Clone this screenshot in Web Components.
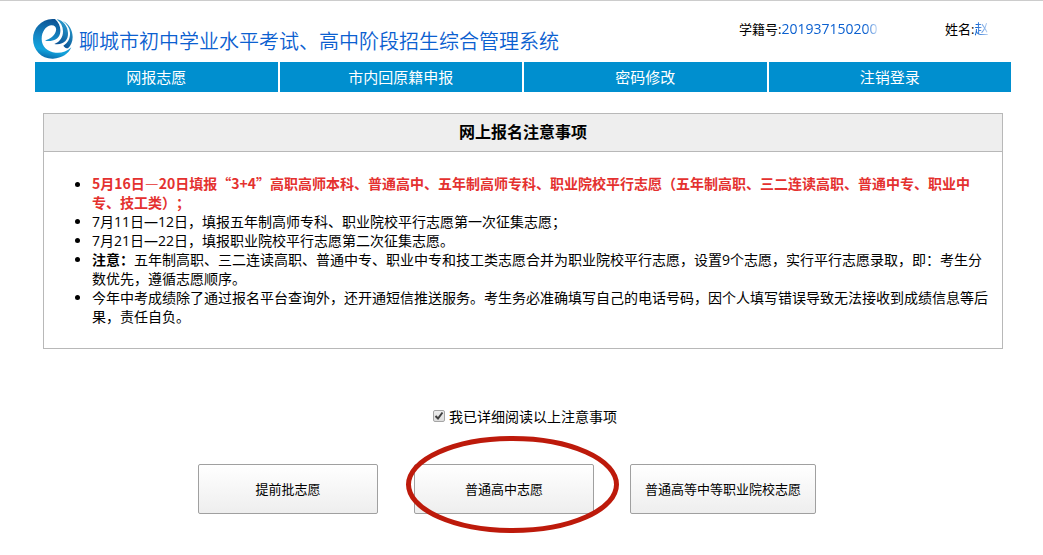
<!DOCTYPE html>
<html lang="zh-CN">
<head>
<meta charset="utf-8">
<meta name="viewport" content="width=device-width, initial-scale=1">
<title>聊城市初中学业水平考试、高中阶段招生综合管理系统</title>
<style>
body {
    margin: 0;
    border-top: 1px solid #ccc;
    background: #fff;
    color: #000;
    font: 14px/19px "Open Sans", "Noto Sans CJK SC", sans-serif;
    text-spacing-trim: space-all;
}

.urgent {
    color: #e4312f;
    font-family: "Noto Sans CJK SC", sans-serif;
    font-weight: bold;
}
</style>
</head>
<body>

<site-header>
    <user-field slot="user" label="学籍号:">201937150200</user-field>
    <user-field slot="user" label="姓名:">赵</user-field>
    聊城市初中学业水平考试、高中阶段招生综合管理系统
</site-header>

<site-nav>
    <nav-item href="#apply">网报志愿</nav-item>
    <nav-item href="#return">市内回原籍申报</nav-item>
    <nav-item href="#password">密码修改</nav-item>
    <nav-item href="#logout">注销登录</nav-item>
</site-nav>

<notice-panel>
    <span slot="title">网上报名注意事项</span>
    <notice-item class="urgent">5月16日—20日填报“3+4”高职高师本科、普通高中、五年制高师专科、职业院校平行志愿（五年制高职、三二连读高职、普通中专、职业中专、技工类）；</notice-item>
    <notice-item>7月11日—12日，填报五年制高师专科、职业院校平行志愿第一次征集志愿；</notice-item>
    <notice-item>7月21日—22日，填报职业院校平行志愿第二次征集志愿。</notice-item>
    <notice-item><b>注意：</b>五年制高职、三二连读高职、普通中专、职业中专和技工类志愿合并为职业院校平行志愿，设置9个志愿，实行平行志愿录取，即：考生分数优先，遵循志愿顺序。</notice-item>
    <notice-item>今年中考成绩除了通过报名平台查询外，还开通短信推送服务。考生务必准确填写自己的电话号码，因个人填写错误导致无法接收到成绩信息等后果，责任自负。</notice-item>
</notice-panel>

<agree-check>我已详细阅读以上注意事项</agree-check>

<choice-bar>
    <choice-button>提前批志愿</choice-button>
    <choice-button circled>普通高中志愿</choice-button>
    <choice-button>普通高等中等职业院校志愿</choice-button>
</choice-bar>

<script>
class SiteHeader extends HTMLElement {
    connectedCallback() {
        const root = this.attachShadow({ mode: "open" });
        root.innerHTML = `
            <style>
                :host { display: flex; align-items: flex-start; height: 61px; padding: 0 32px 0 33px; box-sizing: border-box; }
                svg { flex: none; width: 40px; height: 40px; margin-top: 18px; }
                h1 { flex: none; margin: 27px 0 0 6px; font-size: 20px; line-height: 28px; font-weight: 350; color: #0b60d0; }
                .user { display: flex; gap: 16px; margin: 18px 0 0 auto; }
            </style>
            <svg viewBox="0 0 120 120" aria-hidden="true">
                <defs>
                    <linearGradient id="ring" x1="0.6" y1="0" x2="0.4" y2="1">
                        <stop offset="0" stop-color="#0b4f90"/>
                        <stop offset="0.5" stop-color="#1588c6"/>
                        <stop offset="0.8" stop-color="#12a3dc"/>
                        <stop offset="1" stop-color="#0b6cac"/>
                    </linearGradient>
                    <linearGradient id="blade" x1="0.7" y1="0" x2="0.3" y2="1">
                        <stop offset="0" stop-color="#2a9fd0"/>
                        <stop offset="1" stop-color="#0b5496"/>
                    </linearGradient>
                </defs>
                <path fill="url(#ring)" d="M66 0C28-2 0 25 0 60c0 34 26 60 60 59 27-1 47-15 55-34-14 13-31 18-47 16C44 99 26 83 26 60c0-22 12-38 28-41 13-1 18 8 14 19-4 12-15 20-32 27 22 4 40-4 45-21 4-16-2-33-15-44z"/>
                <path fill="url(#blade)" d="M71 1c20 3 33 21 34 41 1 21-13 37-41 33 17-6 26-20 26-38 0-15-7-27-19-36z"/>
                <path fill="url(#blade)" d="M90 6c18 9 29 27 29 48 0 14-6 27-14 34-6 0-11-3-14-8 14-9 21-23 20-39-1-14-9-26-21-35z"/>
            </svg>
            <h1><slot></slot></h1>
            <div class="user"><slot name="user"></slot></div>
            `
    }
}

class UserField extends HTMLElement {
    connectedCallback() {
        const root = this.attachShadow({ mode: "open" });
        root.innerHTML = `
            <style>
                :host { display: flex; min-width: 66px; line-height: 20px; }
                :host(:first-child) { min-width: 190px; }
                .label { font-size: 13px; }
                /* the end of each value fades out */
                .value { padding-right: 4px; color: #0b60d0; -webkit-mask-image: linear-gradient(to left, transparent, #000 16px); mask-image: linear-gradient(to left, transparent, #000 16px); }
            </style>
            <span class="label">${this.getAttribute("label")}</span>
            <span class="value"><slot></slot></span>
            `
    }
}

class SiteNav extends HTMLElement {
    connectedCallback() {
        const root = this.attachShadow({ mode: "open" });
        root.innerHTML = `
            <style>
                :host { display: block; margin: 0 32px 0 35px; }
                nav { display: grid; grid-template-columns: repeat(4, 1fr); gap: 2px; }
            </style>
            <nav><slot></slot></nav>
            `
    }
}

class NavItem extends HTMLElement {
    connectedCallback() {
        const root = this.attachShadow({ mode: "open" });
        root.innerHTML = `
            <style>
                :host { display: block; }
                a { display: block; background: #008fcf; color: #fff; font-size: 15px; line-height: 30px; text-align: center; text-decoration: none; }
            </style>
            <a href="${this.getAttribute("href")}"><slot></slot></a>
            `
    }
}

class NoticePanel extends HTMLElement {
    connectedCallback() {
        const root = this.attachShadow({ mode: "open" });
        root.innerHTML = `
            <style>
                :host { display: block; margin: 21px 40px 0 43px; border: 1px solid #b8b8b8; }
                h2 { margin: 0; border-bottom: 1px solid #b8b8b8; background: #eee; font-size: 16px; line-height: 37px; text-align: center; }
                div { padding: 22px 8px 22px 48px; }
            </style>
            <h2><slot name="title"></slot></h2>
            <div role="list"><slot></slot></div>
            `
    }
}

class NoticeItem extends HTMLElement {
    connectedCallback() {
        this.setAttribute("role", "listitem");
        const root = this.attachShadow({ mode: "open" });
        root.innerHTML = `
            <style>
                :host { display: list-item; list-style: disc; }
                :host::marker { color: #000; }
            </style>
            <slot></slot>
            `
    }
}

class AgreeCheck extends HTMLElement {
    connectedCallback() {
        const root = this.attachShadow({ mode: "open" });
        root.innerHTML = `
            <style>
                :host { display: flex; justify-content: center; margin: 58px 32px 0 39px; }
                label { display: flex; align-items: flex-start; gap: 4px; line-height: 20px; }
                .box { display: grid; margin-top: 3px; }
                input, svg { grid-area: 1 / 1; width: 12px; height: 12px; }
                input { appearance: none; margin: 0; border: 1px solid #a5a5a5; border-radius: 2px; background: linear-gradient(#eee, #ddd); }
                svg { visibility: hidden; pointer-events: none; }
                input:checked + svg { visibility: visible; }
            </style>
            <label>
                <span class="box">
                    <input type="checkbox" checked>
                    <svg viewBox="0 0 12 12"><path d="M2.5 6l2.5 2.5 4.5-6" fill="none" stroke="#404040" stroke-width="2"/></svg>
                </span>
                <span><slot></slot></span>
            </label>
            `
    }
}

class ChoiceBar extends HTMLElement {
    connectedCallback() {
        const root = this.attachShadow({ mode: "open" });
        root.innerHTML = `
            <style>
                :host { display: flex; justify-content: center; gap: 36px; margin: 37px 68px 40px 39px; }
            </style>
            <slot></slot>
            `
    }
}

class ChoiceButton extends HTMLElement {
    connectedCallback() {
        const root = this.attachShadow({ mode: "open" });
        root.innerHTML = `
            <style>
                :host { display: block; position: relative; }
                button { min-width: 180px; height: 50px; padding: 0 14px; border: 1px solid #a0a0a0; border-radius: 2px; background: linear-gradient(#fff, #eee); color: #000; font: inherit; font-size: 13px; }
                svg { position: absolute; left: -8px; top: -28px; width: 213px; height: 97px; pointer-events: none; }
            </style>
            <button type="button"><slot></slot></button>
            ${this.hasAttribute("circled") ? `
                <svg viewBox="0 0 213 97" aria-hidden="true">
                    <ellipse cx="106.5" cy="48.5" rx="104" ry="46" fill="none" stroke="#bd1a0b" stroke-width="5"/>
                </svg>
            ` : ""}
            `
    }
}

customElements.define("site-header", SiteHeader)
customElements.define("user-field", UserField)
customElements.define("site-nav", SiteNav)
customElements.define("nav-item", NavItem)
customElements.define("notice-panel", NoticePanel)
customElements.define("notice-item", NoticeItem)
customElements.define("agree-check", AgreeCheck)
customElements.define("choice-bar", ChoiceBar)
customElements.define("choice-button", ChoiceButton)
</script>
</body>
</html>
